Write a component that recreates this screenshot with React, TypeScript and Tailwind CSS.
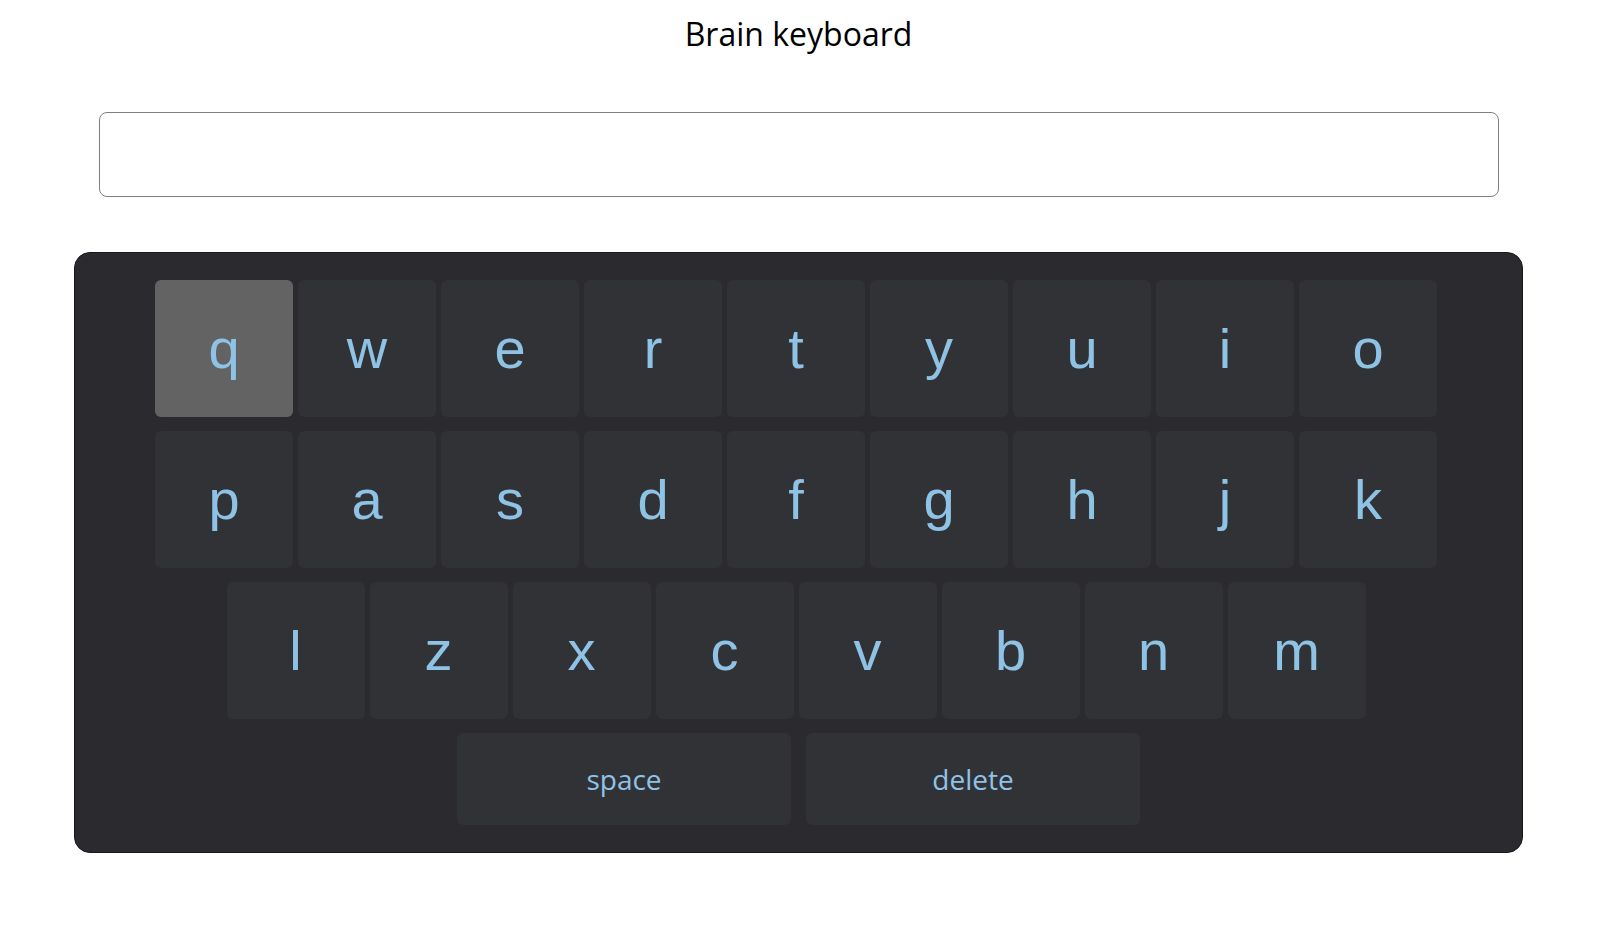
const rows = [
  ["q", "w", "e", "r", "t", "y", "u", "i", "o"],
  ["p", "a", "s", "d", "f", "g", "h", "j", "k"],
  ["l", "z", "x", "c", "v", "b", "n", "m"],
];

function Key({ label, active }: { label: string; active?: boolean }) {
  return (
    <div
      className={`flex h-[137px] w-[138px] items-center justify-center rounded-[6px] text-[56px] text-[#8fc3e6] ${
        active ? "bg-[#636363]" : "bg-[#313236]"
      }`}
      style={{ fontFamily: '"Liberation Sans", Arial, sans-serif' }}
    >
      {label}
    </div>
  );
}

export default function App() {
  return (
    <div
      className="flex min-h-screen flex-col items-center bg-white pr-[3px]"
      style={{ fontFamily: '"Open Sans", "Noto Sans", sans-serif' }}
    >
      <h1 className="pt-[12px] text-[32px] font-normal leading-[44px] text-black">Brain keyboard</h1>

      <div className="mt-[56px] h-[85px] w-[1400px] rounded-[8px] border border-[#808080] bg-white" />

      <div className="mt-[55px] flex w-[1449px] flex-col items-center gap-[14px] rounded-[16px] border border-[#18181b] bg-[#2b2a2f] pb-[27px] pt-[27px]">
        {rows.map((row, i) => (
          <div key={i} className="mr-[5px] flex gap-[5px]">
            {row.map((k) => (
              <Key key={k} label={k} active={k === "q"} />
            ))}
          </div>
        ))}
        <div className="flex gap-[15px]">
          {["space", "delete"].map((k) => (
            <div
              key={k}
              className="flex h-[92px] w-[334px] items-center justify-center rounded-[6px] bg-[#313236] text-[28px] text-[#8fc3e6]"
            >
              {k}
            </div>
          ))}
        </div>
      </div>
    </div>
  );
}
